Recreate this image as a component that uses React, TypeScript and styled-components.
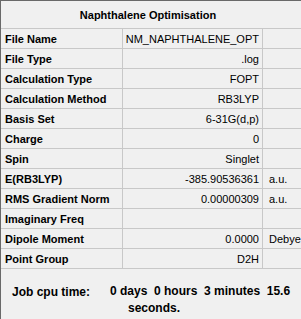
import React from "react";
import styled, { createGlobalStyle } from "styled-components";

const GlobalStyle = createGlobalStyle`
  html, body {
    margin: 0;
    padding: 0;
    background: #f0f0f0;
  }
`;

const Panel = styled.div`
  width: 301px;
  height: 319px;
  box-sizing: border-box;
  background: #f0f0f0;
  border-top: 1px solid #696969;
  border-left: 1px solid #696969;
  font-family: "Liberation Sans", Arial, sans-serif;
  font-size: 11px;
  color: #000;
  overflow: hidden;
`;

const Title = styled.div`
  height: 28px;
  box-sizing: border-box;
  border-bottom: 1px solid #c8c8c8;
  display: flex;
  align-items: center;
  justify-content: center;
  font-weight: bold;
  padding-right: 6px;
`;

const Row = styled.div`
  display: grid;
  grid-template-columns: 122px 140px 1fr;
  height: 20px;
  box-sizing: border-box;
  border-bottom: 1px solid #c8c8c8;
`;

const Cell = styled.div<{ $align?: "left" | "right"; $bold?: boolean; $edge?: boolean }>`
  display: flex;
  align-items: center;
  justify-content: ${(p) => (p.$align === "right" ? "flex-end" : "flex-start")};
  box-sizing: border-box;
  font-weight: ${(p) => (p.$bold ? "bold" : "normal")};
  border-right: ${(p) => (p.$edge ? "1px solid #c8c8c8" : "none")};
  padding: ${(p) => (p.$align === "right" ? "0 3px 0 0" : p.$bold ? "0 0 0 4px" : "0 0 0 6px")};
  white-space: nowrap;
`;

const Footer = styled.div`
  display: flex;
  align-items: flex-start;
  padding: 16px 0 0 11px;
  font-weight: bold;
  font-size: 12px;
`;

const FooterLabel = styled.span`
  width: 98px;
  flex: none;
`;

const FooterValue = styled.div`
  display: flex;
  flex-direction: column;
  line-height: 17px;
  margin-top: -2px;
`;

const Wrapped = styled.span`
  padding-left: 18px;
`;

const rows: [string, string, string][] = [
  ["File Name", "NM_NAPHTHALENE_OPT", ""],
  ["File Type", ".log", ""],
  ["Calculation Type", "FOPT", ""],
  ["Calculation Method", "RB3LYP", ""],
  ["Basis Set", "6-31G(d,p)", ""],
  ["Charge", "0", ""],
  ["Spin", "Singlet", ""],
  ["E(RB3LYP)", "-385.90536361", "a.u."],
  ["RMS Gradient Norm", "0.00000309", "a.u."],
  ["Imaginary Freq", "", ""],
  ["Dipole Moment", "0.0000", "Debye"],
  ["Point Group", "D2H", ""],
];

export default function App() {
  return (
    <>
      <GlobalStyle />
      <Panel>
        <Title>Naphthalene Optimisation</Title>
        {rows.map(([label, value, unit]) => (
          <Row key={label}>
            <Cell $bold $edge>
              {label}
            </Cell>
            <Cell $align="right" $edge>
              {value}
            </Cell>
            <Cell>{unit}</Cell>
          </Row>
        ))}
        <Footer>
          <FooterLabel>Job cpu time:</FooterLabel>
          <FooterValue>
            <span>0 days&nbsp; 0 hours&nbsp; 3 minutes&nbsp; 15.6</span>
            <Wrapped>seconds.</Wrapped>
          </FooterValue>
        </Footer>
      </Panel>
    </>
  );
}
